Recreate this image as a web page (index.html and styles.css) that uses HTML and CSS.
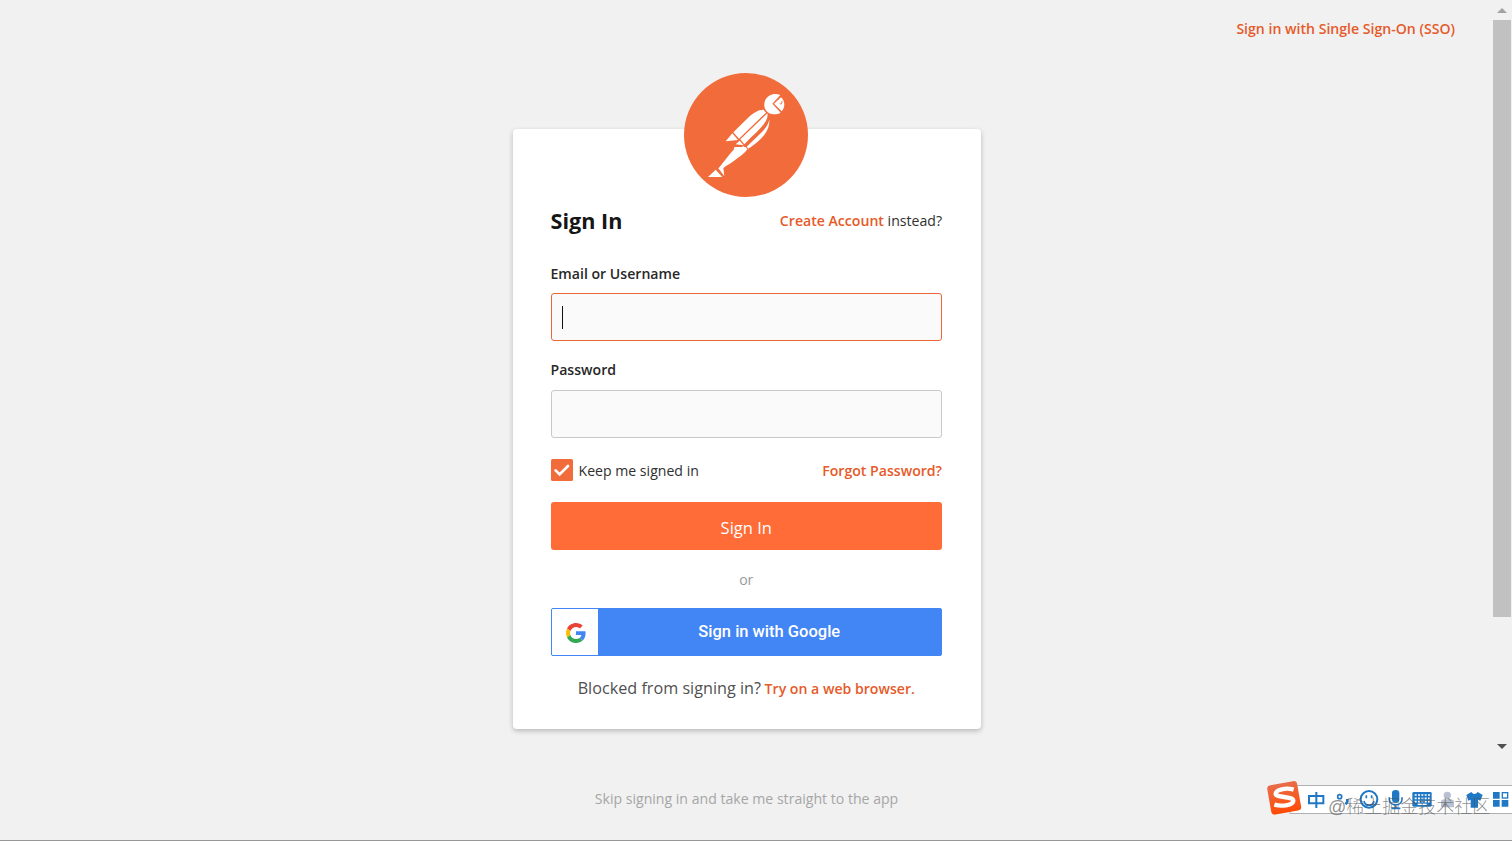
FILE: index.html
```html
<!DOCTYPE html>
<html lang="en">
<head>
<meta charset="utf-8">
<title>Sign In</title>
<link rel="stylesheet" href="styles.css">
</head>
<body>
<div class="window">
  <div class="page">
    <header class="topbar"><a class="link sso">Sign in with Single Sign-On (SSO)</a></header>
    <main class="card">
      <svg class="logo" viewBox="41 36 372 372" aria-label="Postman">
        <circle cx="227" cy="222" r="186" fill="#f26b3a"/>
        <g fill="#fff">
          <path d="M330 102C312 94 292 101 284 119c-7 19 3 36 20 40 9 2 19 1 27-4l-25-27z"/>
          <path d="M332 109l-21 19 23 23c11-12 11-30-2-42z"/>
          <path d="M280 146c-13-1-29 8-42 20l-49 48 17 19 81-78c-3-4-5-6-7-9z"/>
          <path d="M291 157l-81 78 12 15c22-24 42-40 57-59 8-10 15-22 12-34z"/>
          <path d="M297 176c-4 15-11 25-23 38l-45 43 5 6c21-13 43-31 54-51 8-15 9-23 9-36z"/>
          <path d="M186 217l17 20-37 4zM208 239l12 14-24-3zM220 256l10 8-15-4-23-2-2 8z"/>
          <path d="M199 258h27l5 7c-12 17-43 37-72 56l3 25-18-24c19-20 33-45 55-64zM136 326l20 22h-43z"/>
        </g>
        <path d="M328 127q7 7 7-7" fill="none" stroke="#f26b3a" stroke-width="3"/>
      </svg>
      <div class="row heading">
        <h1>Sign In</h1>
        <p class="instead"><a class="link">Create Account</a> instead?</p>
      </div>
      <label class="label">Email or Username</label>
      <div class="field focused"><span class="caret"></span></div>
      <label class="label second">Password</label>
      <div class="field"></div>
      <div class="row options">
        <span class="keep">
          <svg class="check" viewBox="0 0 22 22"><rect width="22" height="22" rx="1.5" fill="#f26b3a"/><path d="M4.6 11.4l4 4L17 7" fill="none" stroke="#fff" stroke-width="2.7" stroke-linecap="round"/></svg>
          <span class="keep-text">Keep me signed in</span>
        </span>
        <a class="link forgot">Forgot Password?</a>
      </div>
      <div class="button">Sign In</div>
      <div class="or">or</div>
      <div class="google">
        <span class="google-icon"><svg viewBox="0 0 48 48" width="20" height="20"><path fill="#EA4335" d="M24 9.5c3.54 0 6.71 1.22 9.21 3.6l6.85-6.85C35.9 2.38 30.47 0 24 0 14.62 0 6.51 5.38 2.56 13.22l7.98 6.19C12.43 13.72 17.74 9.5 24 9.5z"/><path fill="#4285F4" d="M46.98 24.55c0-1.57-.15-3.09-.38-4.55H24v9.02h12.94c-.58 2.96-2.26 5.48-4.78 7.18l7.73 6c4.51-4.18 7.09-10.36 7.09-17.65z"/><path fill="#FBBC05" d="M10.53 28.59c-.48-1.45-.76-2.99-.76-4.59s.27-3.14.76-4.59l-7.98-6.19C.92 16.46 0 20.12 0 24c0 3.88.92 7.54 2.56 10.78l7.97-6.19z"/><path fill="#34A853" d="M24 48c6.48 0 11.93-2.13 15.89-5.81l-7.73-6c-2.15 1.45-4.92 2.3-8.16 2.3-6.26 0-11.57-4.22-13.47-9.91l-7.98 6.19C6.51 42.62 14.62 48 24 48z"/></svg></span>
        <span class="google-text">Sign in with Google</span>
      </div>
      <p class="blocked"><span class="blocked-text">Blocked from signing in?</span> <a class="link try">Try on a web browser.</a></p>
    </main>
    <a class="skip">Skip signing in and take me straight to the app</a>
  </div>
  <div class="scrollbar">
    <svg class="arrow" viewBox="0 0 18 20"><path d="M4 13l5-5 5 5z" fill="#a3a3a3"/></svg>
    <div class="thumb"></div>
    <svg class="arrow down" viewBox="0 0 18 20"><path d="M4 7l5 5 5-5z" fill="#505050"/></svg>
  </div>
</div>
<div class="ime">
  <svg viewBox="0 0 756 213" width="252" height="71">
    <rect x="90" y="46" width="670" height="84" fill="#fff" stroke="#8b8f94" stroke-width="2"/>
    <defs><linearGradient id="sogou" x2="0" y2="1"><stop stop-color="#e86d4a"/><stop offset="1" stop-color="#ff4b05"/></linearGradient></defs>
    <rect x="27" y="39" width="91" height="89" rx="11" transform="rotate(-10 72 83)" fill="url(#sogou)"/>
    <path d="M101 59C77 52 48 59 47 71c-1 13 52 7 53 21 0 12-31 19-57 12" fill="none" stroke="#fff" stroke-width="13"/>
    <g fill="none" stroke="#2078c5" stroke-width="6">
      <path d="M147 78h43v22h-43zM169 66v48"/>
      <circle cx="239" cy="80" r="6" stroke-width="5"/><path d="M262 87v8l-5 8" stroke-width="8"/>
      <circle cx="327" cy="88" r="25"/><path d="M319 76v9M335 76v9M312 93c3 17 27 17 30 0" stroke-width="5"/>
      <path d="M388 82v6c0 22 38 22 38 0v-6M407 104v12M394 115h27" stroke-width="5"/>
    </g>
    <g fill="#2078c5">
      <rect x="396" y="60" width="22" height="38" rx="10"/>
      <rect x="457" y="66" width="58" height="44" rx="4"/>
      <path d="M634 66c5 8 14 8 19 0l15 9-7 17-7-3v24h-22V89l-7 3-6-17z"/>
      <path d="M699 66h20v20h-20zM699 90h20v20h-20zM725 90h20v20h-20z"/>
    </g>
    <rect x="727" y="68" width="16" height="16" fill="none" stroke="#2078c5" stroke-width="4"/>
    <path d="M464 75h46M464 85h46M464 95h46" stroke="#fff" stroke-width="5" stroke-dasharray="6 4"/><path d="M473 103h27" stroke="#fff" stroke-width="4"/>
    <g fill="#b8c0d1"><circle cx="562" cy="76" r="11"/><path d="M543 112V98q0-10 10-10h19q10 0 10 10v14z"/></g>
  </svg>
  <span class="watermark">@稀土掘金技术社区</span>
</div>
</body>
</html>
```
FILE: styles.css
```css
* { box-sizing: border-box; }
body {
  margin: 0;
  width: 1512px;
  height: 841px;
  overflow: hidden;
  position: relative;
  background: #f1f1f1;
  border-bottom: 1px solid #969696;
  font-family: "Open Sans", "Noto Sans", sans-serif;
  font-size: 14.1px;
  color: #303030;
}
h1, p { margin: 0; }
.window { display: flex; height: 840px; }
.page {
  flex: 1;
  display: flex;
  flex-direction: column;
  align-items: center;
}
.topbar {
  width: 100%;
  height: 129px;
  padding: 19px 38px 0 0;
  text-align: right;
  line-height: 20px;
}
.link { color: #e65a29; font-weight: 600; white-space: nowrap; }
.card {
  width: 468px;
  height: 600px;
  padding: 0 38.5px 0 38px;
  display: flex;
  flex-direction: column;
  background: #fff;
  border-radius: 4px;
  box-shadow: 0 2px 5px rgba(0, 0, 0, .24);
}
.logo { width: 124px; height: 124px; margin: -56.5px auto 0; flex: none; }
.row { display: flex; justify-content: space-between; align-items: center; }
.heading { height: 30px; margin-top: 9px; }
h1 { font-size: 21.6px; line-height: 30px; font-weight: 700; color: #161616; }
.label {
  margin-top: 28px;
  height: 20px;
  line-height: 20px;
  font-weight: 600;
  color: #282828;
}
.label.second { margin-top: 19px; }
.field {
  height: 48px;
  margin-top: 9.5px;
  padding: 12px 10px;
  border: 1px solid #c9c9c9;
  border-radius: 3px;
  background: #fafafa;
}
.focused { border-color: #eb673a; }
.caret { display: block; width: 1.3px; height: 23px; background: #111; }
.options { height: 22px; margin-top: 21.5px; }
.keep { display: flex; align-items: center; gap: 6px; }
.check { width: 22px; height: 22px; }
.button {
  height: 48px;
  margin-top: 21px;
  line-height: 51px;
  text-align: center;
  border-radius: 3px;
  background: #ff6c37;
  color: #fff;
  font-size: 16.5px;
}
.or { height: 20px; margin-top: 20px; line-height: 20px; text-align: center; color: #999; }
.google {
  display: flex;
  height: 48px;
  margin-top: 18px;
  border: 1px solid #4285f4;
  border-radius: 2px;
  background: #4285f4;
  overflow: hidden;
}
.google-icon {
  width: 46px;
  padding: 2px 0 0 2px;
  display: flex;
  align-items: center;
  justify-content: center;
  background: #fff;
}
.google-text {
  flex: 1;
  text-align: center;
  color: #fff;
  font: 500 16.5px/45px Roboto, sans-serif;
}
.blocked { margin-top: 20px; line-height: 24px; text-align: center; white-space: nowrap; }
.blocked-text { font-size: 16.2px; color: #505050; }
.skip { margin-top: 60px; line-height: 20px; color: #a6a6a6; }
.scrollbar { width: 19px; height: 757px; display: flex; flex-direction: column; }
.arrow { width: 18px; height: 20px; flex: none; }
.thumb { width: 18px; height: 597px; background: #c1c1c1; }
.down { margin-top: 120px; }
.ime { position: absolute; left: 1260px; top: 770px; width: 252px; height: 71px; overflow: hidden; }
.ime svg { display: block; }
.watermark {
  position: absolute;
  left: 68px;
  top: 24px;
  line-height: 26px;
  font-family: "Liberation Sans", "Noto Sans CJK SC", sans-serif;
  font-size: 18px;
  font-weight: 300;
  color: rgba(80, 80, 80, .65);
  white-space: nowrap;
}
```
